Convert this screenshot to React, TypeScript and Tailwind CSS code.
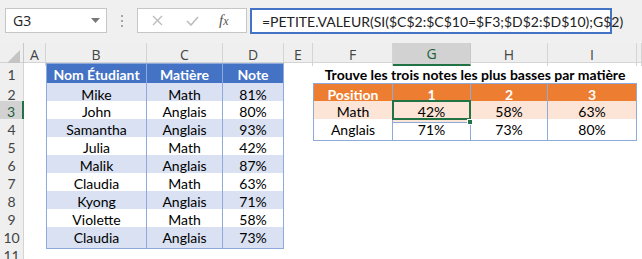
import React from 'react';

const GRID = 'grid grid-cols-[24px_22px_101px_76px_61px_29px_80px_78px_77px_89px_5px]';
const LETTERS = ['A', 'B', 'C', 'D', 'E', 'F', 'G', 'H', 'I', ''];

const students = [
  ['Mike', 'Math', '81%'],
  ['John', 'Anglais', '80%'],
  ['Samantha', 'Anglais', '93%'],
  ['Julia', 'Math', '42%'],
  ['Malik', 'Anglais', '87%'],
  ['Claudia', 'Math', '63%'],
  ['Kyong', 'Anglais', '71%'],
  ['Violette', 'Math', '58%'],
  ['Claudia', 'Anglais', '73%'],
];

const lowest = [
  ['Position', '1', '2', '3'],
  ['Math', '42%', '58%', '63%'],
  ['Anglais', '71%', '73%', '80%'],
];

function RowHeader({ n, active }: { n: number; active?: boolean }) {
  return (
    <div
      className={
        active
          ? 'flex items-center justify-center bg-[#d2d2d2] border-b border-[#d4d4d4] border-r-2 border-r-[#217346] text-[#1e5f3a] text-[14px]'
          : 'flex items-center justify-center bg-[#efefef] border-b border-r border-[#d4d4d4] text-[#444] text-[14px]'
      }
    >
      {n}
    </div>
  );
}

function Cell({ children, className = '' }: { children?: React.ReactNode; className?: string }) {
  return <div className={'flex items-center justify-center whitespace-nowrap ' + className}>{children}</div>;
}

export default function App() {
  return (
    <div className="w-[642px] h-[259px] overflow-hidden bg-white font-['Lato',sans-serif] text-black">
      {/* Toolbar */}
      <div className="h-[43px] bg-[#f0f0f0] flex items-start pt-[8px]">
        <div className="ml-[5px] w-[102px] h-[25px] bg-white border border-[#c6c6c6] flex items-center justify-between pl-[7px] pr-[6px]">
          <span className="text-[14px] font-['Open_Sans',sans-serif] text-[#222]">G3</span>
          <svg width="9" height="5" viewBox="0 0 9 5">
            <path d="M0 0h9L4.5 5z" fill="#777" />
          </svg>
        </div>
        <div className="w-[30px] h-[25px] flex flex-col items-center justify-center gap-[3px]">
          <span className="w-[2px] h-[2px] bg-[#a6a6a6]" />
          <span className="w-[2px] h-[2px] bg-[#a6a6a6]" />
          <span className="w-[2px] h-[2px] bg-[#a6a6a6]" />
        </div>
        <div className="w-[110px] h-[25px] bg-white border border-[#c6c6c6] flex items-center">
          <svg className="ml-[14px]" width="11" height="11" viewBox="0 0 11 11">
            <path d="M1 1l9 9M10 1l-9 9" stroke="#bdbdbd" strokeWidth="1.4" />
          </svg>
          <svg className="ml-[23px]" width="13" height="10" viewBox="0 0 13 10">
            <path d="M1 5l4 4 7-8" stroke="#bdbdbd" strokeWidth="1.6" fill="none" />
          </svg>
          <span className="ml-[20px] font-['Liberation_Serif',serif] italic text-[15px] text-[#555] leading-none">
            f<span className="text-[12px]">x</span>
          </span>
        </div>
        <div className="ml-[3px] w-[362px] h-[26px] bg-white border-2 border-[#4472c4] flex items-center pl-[10px]">
          <span className="text-[14px] text-[#222] whitespace-nowrap">=PETITE.VALEUR(SI($C$2:$C$10=$F3;$D$2:$D$10);G$2)</span>
        </div>
      </div>

      {/* Column headers */}
      <div className={GRID + ' h-[20px] bg-[#efefef] border-b border-[#d4d4d4]'}>
        <div className="border-r border-[#c8c8c8] flex items-end justify-end p-[3px]">
          <svg width="13" height="13" viewBox="0 0 13 13">
            <path d="M13 0V13H0z" fill="#c4c4c4" />
          </svg>
        </div>
        {LETTERS.map((l, i) => (
          <div
            key={i}
            className={
              l === 'G'
                ? "flex items-center justify-center bg-[#d2d2d2] border-r border-[#c8c8c8] border-b-2 border-b-[#217346] text-[#1e5f3a] text-[14px] font-['Open_Sans',sans-serif]"
                : "flex items-center justify-center border-r border-[#d4d4d4] text-[#444] text-[14px] font-['Open_Sans',sans-serif]"
            }
          >
            {l}
          </div>
        ))}
      </div>

      {/* Row 1 */}
      <div className={GRID + ' h-[20px] text-[14px]'}>
        <RowHeader n={1} />
        <div />
        <Cell className="bg-[#4472c4] text-white font-bold border border-[#8eaadb]">Nom Étudiant</Cell>
        <Cell className="bg-[#4472c4] text-white font-bold border-t border-b border-r border-[#8eaadb]">Matière</Cell>
        <Cell className="bg-[#4472c4] text-white font-bold border-t border-b border-r border-[#8eaadb]">Note</Cell>
        <div />
        <Cell className="col-span-4 font-bold">Trouve les trois notes les plus basses par matière</Cell>
        <div />
      </div>

      {/* Rows 2-10 */}
      {students.map((s, i) => {
        const row = i + 2;
        const band = row % 2 === 0 ? 'bg-[#d9e1f2]' : 'bg-white';
        const side = i < 3 ? lowest[i] : null;
        return (
          <div key={row} className={GRID + ' h-[18px] text-[14px]'}>
            <RowHeader n={row} active={row === 3} />
            <div />
            <Cell className={band + ' border-l border-r border-b border-[#8eaadb]'}>{s[0]}</Cell>
            <Cell className={band + ' border-r border-b border-[#8eaadb]'}>{s[1]}</Cell>
            <Cell className={band + ' border-r border-b border-[#8eaadb]'}>{s[2]}</Cell>
            <div />
            {side ? (
              side.map((v, j) => {
                const fill = i === 0 ? 'bg-[#ed7d31] text-white font-bold' : i === 1 ? 'bg-[#fce4d6]' : 'bg-white';
                const edges = (j === 0 ? 'border-l ' : '') + (i === 0 ? 'border-t ' : '') + 'border-r border-b border-[#8eaadb]';
                if (i === 1 && j === 1) {
                  // active cell G3 with selection frame and fill handle
                  return (
                    <Cell key={j} className={fill + ' relative ' + edges}>
                      {v}
                      <div className="absolute -left-[1px] -top-[1px] w-[79px] h-[20px] border-2 border-[#217346]" />
                      <div className="absolute -right-[3px] -bottom-[3px] w-[6px] h-[6px] bg-[#217346] border border-white" />
                    </Cell>
                  );
                }
                return (
                  <Cell key={j} className={fill + ' ' + edges}>
                    {v}
                  </Cell>
                );
              })
            ) : (
              <>
                <div />
                <div />
                <div />
                <div />
              </>
            )}
            <div />
          </div>
        );
      })}

      {/* Row 11 */}
      <div className={GRID + ' h-[18px]'}>
        <RowHeader n={11} />
      </div>
    </div>
  );
}
